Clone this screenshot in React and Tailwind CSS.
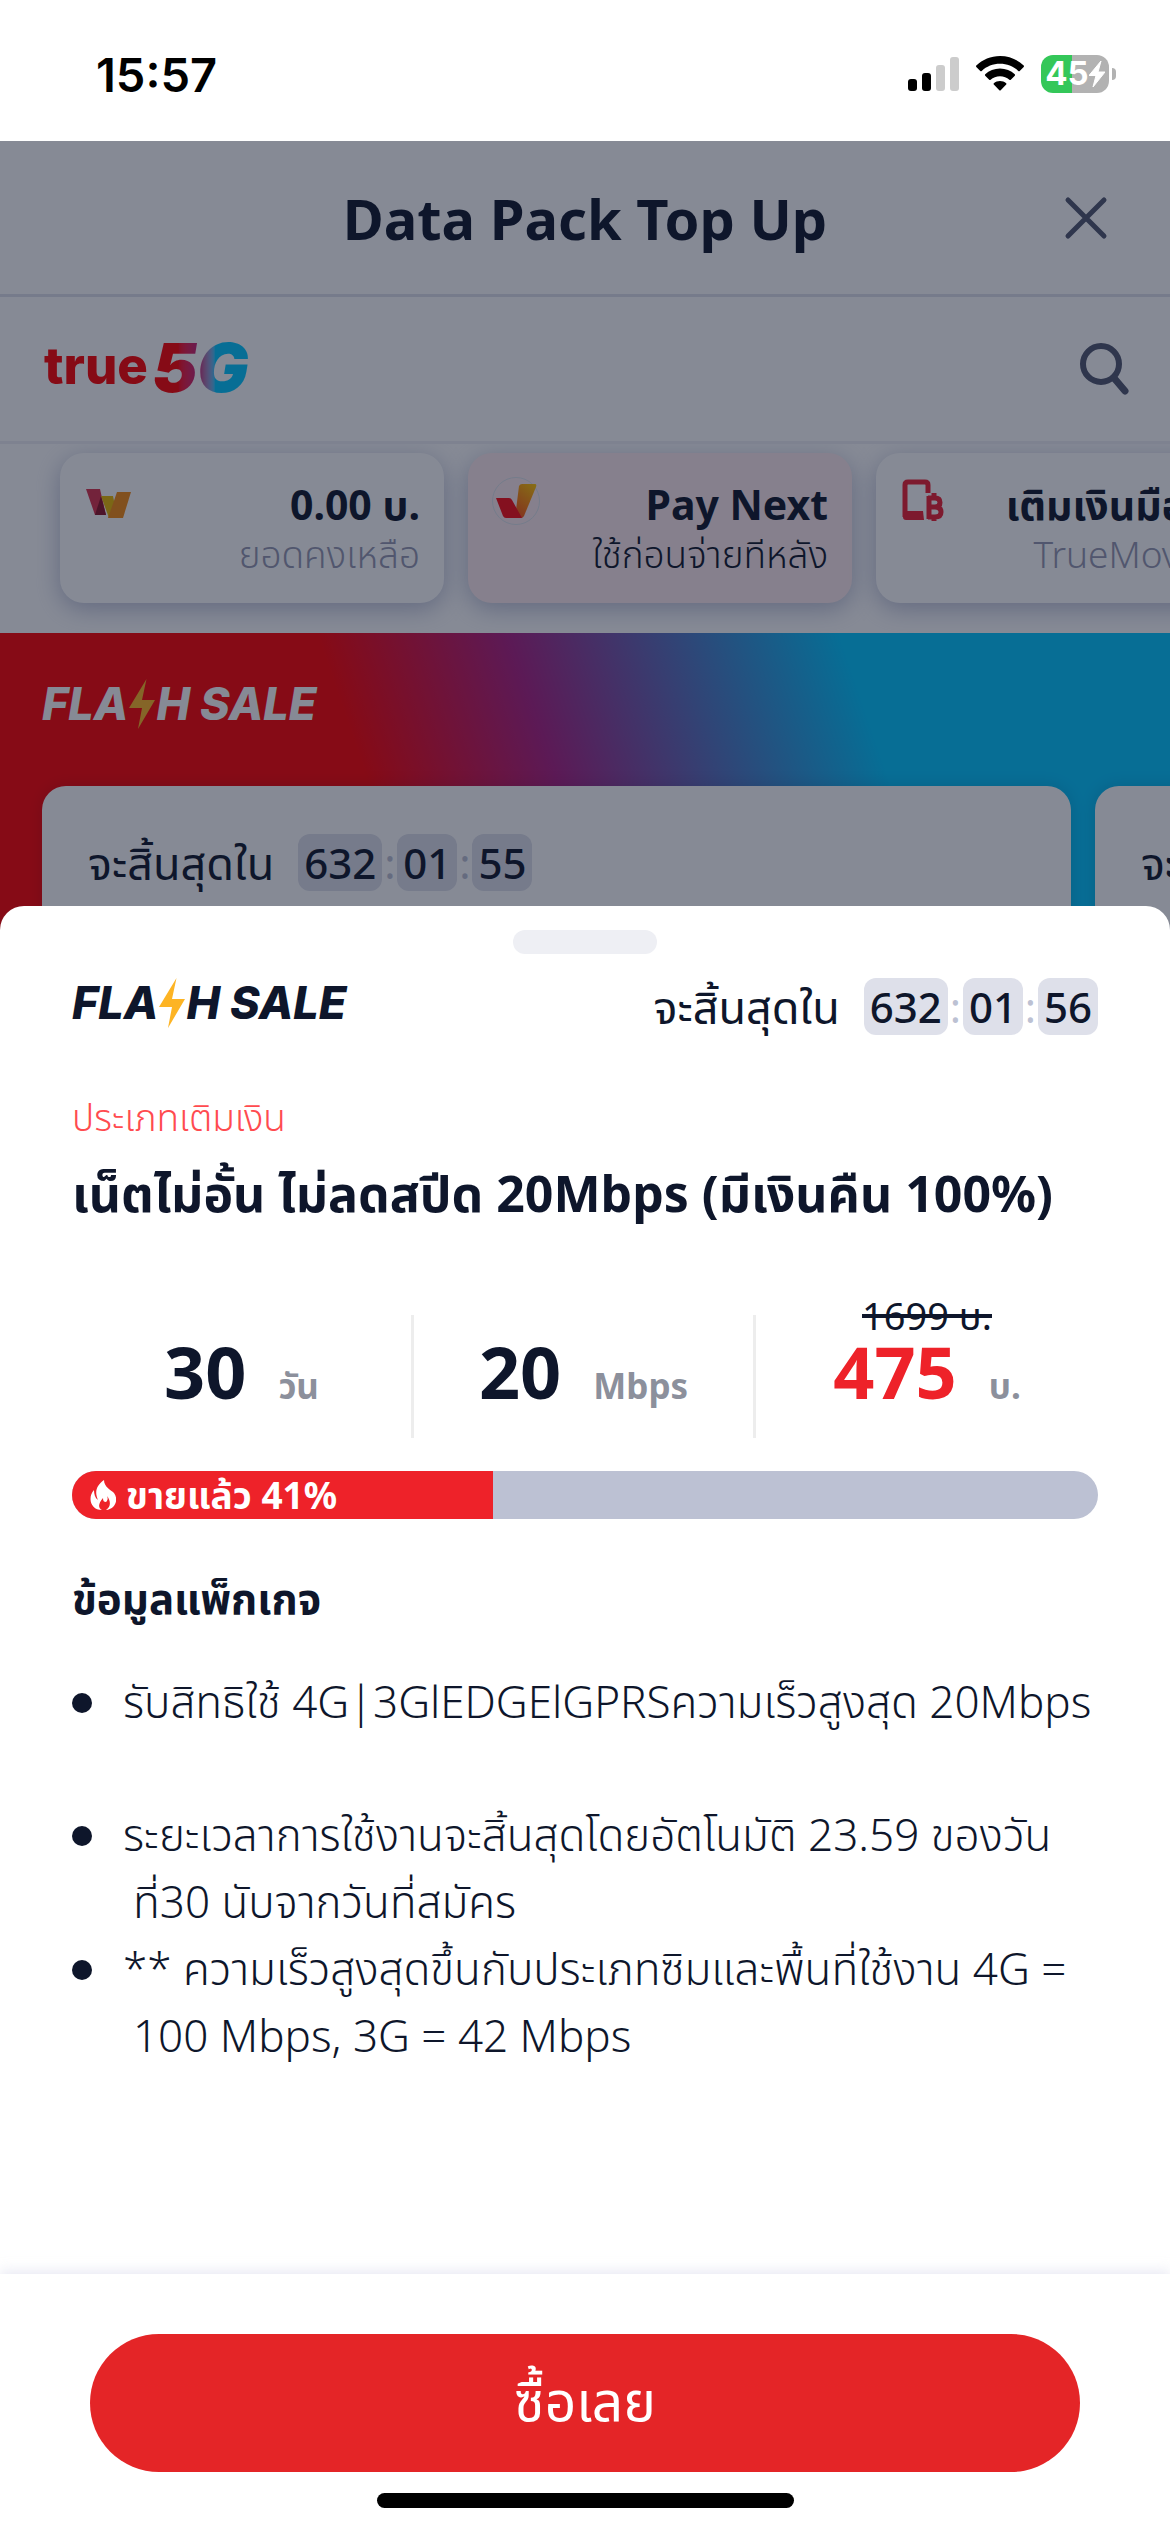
import React from "react";

function Bolt({ className }) {
  return (
    <svg viewBox="0 0 26 50" className={className} aria-hidden="true">
      <path d="M17.500 0 0 29h13L9 50 26 21H13z" fill="currentColor" />
    </svg>
  );
}

function FlashSale({ className }) {
  return (
    <h2 aria-label="FLASH SALE" className={`flex items-center font-['Inter',sans-serif] text-[45px] leading-[48px] font-extrabold italic ${className}`}>
      <span>FLA</span>
      <Bolt className="h-[50px] w-7 text-[#fdb424]" />
      <span>H SALE</span>
    </h2>
  );
}

function Countdown({ parts }) {
  return (
    <div className="flex items-center text-[42px] leading-[57px]">
      <span className="mr-6 text-[45px] whitespace-nowrap">จะสิ้นสุดใน</span>
      {parts.map((part, i) => (
        <React.Fragment key={i}>
          {i > 0 && <span className="w-[15px] text-center text-[#bcc1d3]">:</span>}
          <span className="rounded-xl bg-[#dee0ea] px-1.5 font-medium">{part}</span>
        </React.Fragment>
      ))}
    </div>
  );
}

function StatusBar() {
  return (
    <div className="flex h-[141px] items-center justify-between bg-white pr-[54px] pl-[96px] font-['Inter',sans-serif] text-black">
      <span className="pt-2 text-[47px] leading-none font-semibold">15:57</span>
      <div className="flex items-center gap-[17px] pt-1.5">
        <svg viewBox="0 0 51 36" className="h-9 w-[51px]" aria-hidden="true">
          <rect x="0" y="23" width="9" height="12" rx="3" />
          <rect x="14" y="17" width="9" height="18" rx="3" />
          <rect x="28" y="9" width="9" height="26" rx="3" fill="#ccc" />
          <rect x="42" y="1" width="9" height="34" rx="3" fill="#ccc" />
        </svg>
        <svg viewBox="0 0 48 36" className="h-9 w-12" aria-hidden="true">
          <path d="M24 0C14.800 0 6.500 3.600.3 9.500c-.4.4-.4 1 0 1.400l4 4c.4.4 1 .4 1.400 0C10.500 10.400 17 7.800 24 7.800s13.500 2.600 18.300 7.100c.4.4 1 .4 1.400 0l4-4c.4-.4.4-1 0-1.400C41.500 3.600 33.200 0 24 0z" />
          <path d="M24 12.500c-5.700 0-10.900 2.200-14.800 5.700-.4.4-.4 1.100 0 1.500l4 4c.4.4 1 .4 1.400.1 2.500-2.200 5.800-3.500 9.400-3.500s6.900 1.300 9.400 3.500c.4.300 1 .3 1.400-.1l4-4c.4-.4.4-1.100 0-1.500-3.900-3.500-9.100-5.700-14.800-5.700z" />
          <path d="M24 25c-2.300 0-4.500.8-6.200 2.200-.4.400-.4 1 0 1.400l5.500 5.700c.4.4 1 .4 1.400 0l5.500-5.700c.4-.4.4-1 0-1.400C28.500 25.800 26.300 25 24 25z" />
        </svg>
        <div className="flex items-center gap-[3px]">
          <div className="flex h-[38px] w-[68px] items-center justify-center rounded-xl bg-linear-to-r from-[#34c759] from-45% to-[#b2b2b2] to-45% text-white">
            <span className="text-[33px] leading-none font-bold">45</span>
            <svg viewBox="0 0 16 26" className="h-[26px] w-4" aria-hidden="true">
              <path d="M12 0 0 14.500h7L4 26l12-15H9z" fill="currentColor" stroke="currentColor" strokeLinejoin="round" />
            </svg>
          </div>
          <div className="h-3 w-1 rounded-r-full bg-[#b2b2b2]" />
        </div>
      </div>
    </div>
  );
}

function WalletCard({ icon, title, subtitle, tone, subtitleTone }) {
  return (
    <button
      type="button"
      className={`flex h-[150px] w-96 shrink-0 items-start justify-between rounded-3xl pt-6 pr-6 pl-6 text-right shadow-[0_6px_24px_rgba(100,110,160,0.45)] ${tone}`}
    >
      {icon}
      <span className="flex flex-col whitespace-nowrap">
        <span className="text-[41px] leading-[54px] font-bold">{title}</span>
        <span className={`text-[37px] leading-[46px] font-light ${subtitleTone}`}>{subtitle}</span>
      </span>
    </button>
  );
}

const WalletIcon = (
  <svg viewBox="0 0 48 48" className="size-12 shrink-0" aria-hidden="true">
    <path d="M2 12h14l6 26H11z" fill="#d8304a" />
    <path d="M17 19 22 38H11z" fill="#8a1226" />
    <path d="M17 19h12l2 10-6 12z" fill="#e8b800" />
    <path d="M33 15h14l-8 26H24z" fill="#f58a10" />
  </svg>
);

const PayNextIcon = (
  <svg viewBox="0 0 48 48" className="size-12 shrink-0" aria-hidden="true">
    <defs>
      <linearGradient id="payCheck" x1="0.9" y1="0" x2="0.4" y2="1">
        <stop offset="0" stopColor="#ffc400" />
        <stop offset="1" stopColor="#fa5a10" />
      </linearGradient>
    </defs>
    <circle cx="24" cy="24" r="23.500" fill="none" stroke="#dbe2ea" />
    <path d="M27 9q1-2 3-2h13q2 0 1 3L32 39q-1 2-3 2h-6z" fill="url(#payCheck)" />
    <path d="M4 21h13q2 0 3 2l10 18H14q-2 0-3-2z" fill="#fb0a12" />
  </svg>
);

const TopUpIcon = (
  <svg viewBox="0 0 48 48" className="size-12 shrink-0" fill="none" stroke="#ed1f30" aria-hidden="true">
    <path d="M28 16V8q0-3-3-3H8Q5 5 5 8v32" strokeWidth="5" />
    <path d="M3 34h20l1 9H6q-3 0-3-3z" fill="#ed1f30" stroke="none" />
    <path d="M28 21h7q5 0 5 4.500t-5 4.500h-7m7 0q6 0 6 5t-6 5h-7M29 19v23M34 16v5M34 39v5" strokeWidth="5" />
  </svg>
);

function BackgroundPage() {
  return (
    <div className="col-start-1 row-start-1 min-w-0 overflow-hidden bg-white">
      <header className="grid h-[156px] grid-cols-[1fr_auto_1fr] items-center border-b-[3px] border-[#dee0ea] px-[60px]">
        <h1 className="col-start-2 text-[56px] leading-none font-bold">Data Pack Top Up</h1>
        <button type="button" aria-label="Close" className="justify-self-end text-[#50566e]">
          <svg viewBox="0 0 48 48" className="size-12" fill="none" stroke="currentColor" strokeWidth="5" strokeLinecap="round" aria-hidden="true">
            <path d="m6 6 36 36M42 6 6 42" />
          </svg>
        </button>
      </header>
      <div className="flex h-[147px] items-center justify-between border-b-[3px] border-[#eeeff4] pr-10 pl-11">
        <div className="flex items-center gap-1">
          <span className="pb-2 font-['Inter',sans-serif] text-[51px] leading-none font-extrabold text-[#fe0000]">true</span>
          <span className="bg-linear-to-r from-[#fe0000] from-25% via-[#c0207a] via-45% to-[#00c6ff] to-60% bg-clip-text pr-2 pb-1 font-['Inter',sans-serif] text-[68px] leading-none font-black text-transparent italic">5G</span>
        </div>
        <button type="button" aria-label="Search" className="text-[#50566e]">
          <svg viewBox="0 0 52 60" className="h-[60px] w-[52px]" fill="none" stroke="currentColor" aria-hidden="true">
            <circle cx="23" cy="25" r="18" strokeWidth="6" />
            <path d="m36 39 11 13" strokeWidth="7" strokeLinecap="round" />
          </svg>
        </button>
      </div>
      <div className="flex gap-6 overflow-hidden pt-[9px] pb-[30px] pl-[60px]">
        <WalletCard icon={WalletIcon} title="0.00 บ." subtitle="ยอดคงเหลือ" tone="bg-white" subtitleTone="text-[#9497b0]" />
        <WalletCard icon={PayNextIcon} title="Pay Next" subtitle="ใช้ก่อนจ่ายทีหลัง" tone="bg-[#ffebee]" subtitleTone="" />
        <WalletCard icon={TopUpIcon} title="เติมเงินมือถือ" subtitle="TrueMove H" tone="bg-white" subtitleTone="text-[#9497b0]" />
      </div>
      <section className="flex h-[306px] flex-col gap-[57px] overflow-hidden bg-[linear-gradient(71deg,#ff0000_33%,#aa1e80_48%,#00c6ff_74%)] pt-[46px] pl-[42px]">
        <FlashSale className="text-white" />
        <div className="flex gap-6">
          <div className="h-[280px] w-[1029px] shrink-0 rounded-3xl bg-white px-[46px] pt-12 shadow-[0_0_16px_rgba(14,22,43,0.15)]">
            <Countdown parts={["632", "01", "55"]} />
          </div>
          <div className="h-[280px] w-[1029px] shrink-0 rounded-3xl bg-white px-[46px] pt-12 shadow-[0_0_16px_rgba(14,22,43,0.15)]">
            <Countdown parts={["632", "01", "55"]} />
          </div>
        </div>
      </section>
    </div>
  );
}

function Stat({ value, unit, valueTone, oldPrice, divided }) {
  return (
    <div className={`flex h-[123px] flex-col items-center justify-end pb-3 ${divided ? "border-r-[3px] border-[#ededed]" : ""}`}>
      {oldPrice && <del className="text-[38px] leading-[32px] decoration-[4px]">{oldPrice}</del>}
      <p className="flex items-baseline gap-[32px] leading-[80px] font-bold">
        <span className={`text-[72px] ${valueTone}`}>{value}</span>
        <span className="text-[35px] text-[#8c909c]">{unit}</span>
      </p>
    </div>
  );
}

function Bullet({ children, className }) {
  return (
    <li className={`flex ${className}`}>
      <span className="mt-[25px] mr-[31px] size-5 shrink-0 rounded-full bg-[#0e162b]" />
      <span className="flex flex-col whitespace-nowrap">{children}</span>
    </li>
  );
}

function OfferSheet() {
  return (
    <section role="dialog" aria-label="FLASH SALE" className="z-10 col-start-1 row-start-1 mt-[765px] flex min-w-0 flex-col rounded-t-3xl bg-white">
      <div className="mt-6 h-6 w-36 self-center rounded-full bg-[#eeeff4]" />
      <div className="flex-1 px-[72px] pt-6">
        <div className="flex items-start justify-between">
          <FlashSale className="" />
          <Countdown parts={["632", "01", "56"]} />
        </div>
        <p className="mt-14 text-[37px] leading-[52px] font-light text-[#ff4b4f]">ประเภทเติมเงิน</p>
        <h3 className="mt-3.5 text-[50px] leading-[72px] font-bold whitespace-nowrap">เน็ตไม่อั้น ไม่ลดสปีด 20Mbps (มีเงินคืน 100%)</h3>
        <div className="mt-[86px] grid grid-cols-3">
          <Stat value="30" unit="วัน" valueTone="" divided />
          <Stat value="20" unit="Mbps" valueTone="" divided />
          <Stat value="475" unit="บ." valueTone="text-[#ee2229]" oldPrice="1699 บ." />
        </div>
        <div role="progressbar" aria-label="ขายแล้ว" aria-valuenow={41} aria-valuemin={0} aria-valuemax={100} className="mt-[33px] h-12 overflow-hidden rounded-full bg-[#bcc1d3]">
          <div className="flex h-full w-[41%] items-center gap-2.5 bg-[#ee2229] pl-[18px] text-white">
            <svg viewBox="0 0 26 30" className="h-[30px] w-[26px]" fill="currentColor" aria-hidden="true">
              <path d="M14 0C7 5 4 11 8 20 5 18 4 14 4 10-3 18 1 30 12 30c-4-2-4-6 1-12 0 3 1 4 3 4 2-2 2-4 1-6 4 5 4 11-1 14 9-1 13-10 8-17C21 10 14 7 14 0z" />
            </svg>
            <span className="text-[37px] leading-[44px] font-bold whitespace-nowrap">ขายแล้ว 41%</span>
          </div>
        </div>
        <h4 className="mt-[46px] text-[42px] leading-[66px] font-bold">ข้อมูลแพ็กเกจ</h4>
        <ul className="mt-[37px] text-[44px] leading-[67px] font-light">
          <Bullet className="mb-[66px]">รับสิทธิใช้ 4G|3GlEDGElGPRSความเร็วสูงสุด 20Mbps</Bullet>
          <Bullet className="">
            <span>ระยะเวลาการใช้งานจะสิ้นสุดโดยอัตโนมัติ 23.59 ของวัน</span>
            <span className="pl-2.5">ที่30 นับจากวันที่สมัคร</span>
          </Bullet>
          <Bullet className="">
            <span>** ความเร็วสูงสุดขึ้นกับประเภทซิมและพื้นที่ใช้งาน 4G =</span>
            <span className="pl-2.5">100 Mbps, 3G = 42 Mbps</span>
          </Bullet>
        </ul>
      </div>
      <div className="flex flex-col items-center bg-white px-[90px] pt-[60px] pb-6 shadow-[0_-3px_12px_rgba(188,193,220,0.35)]">
        <button type="button" className="h-[138px] w-full rounded-full bg-[#e42527] pb-2 text-[55px] leading-none text-white">
          ซื้อเลย
        </button>
        <div className="mt-[21px] h-[15px] w-[417px] rounded-full bg-black" />
      </div>
    </section>
  );
}

export default function App() {
  return (
    <div className="flex min-h-screen flex-col overflow-hidden bg-white font-['Noto_Sans','Noto_Sans_Thai',sans-serif] text-[#0e162b]">
      <StatusBar />
      <main className="relative grid flex-1">
        <BackgroundPage />
        <div className="absolute inset-0 bg-[#0e162b]/50" />
        <OfferSheet />
      </main>
    </div>
  );
}
